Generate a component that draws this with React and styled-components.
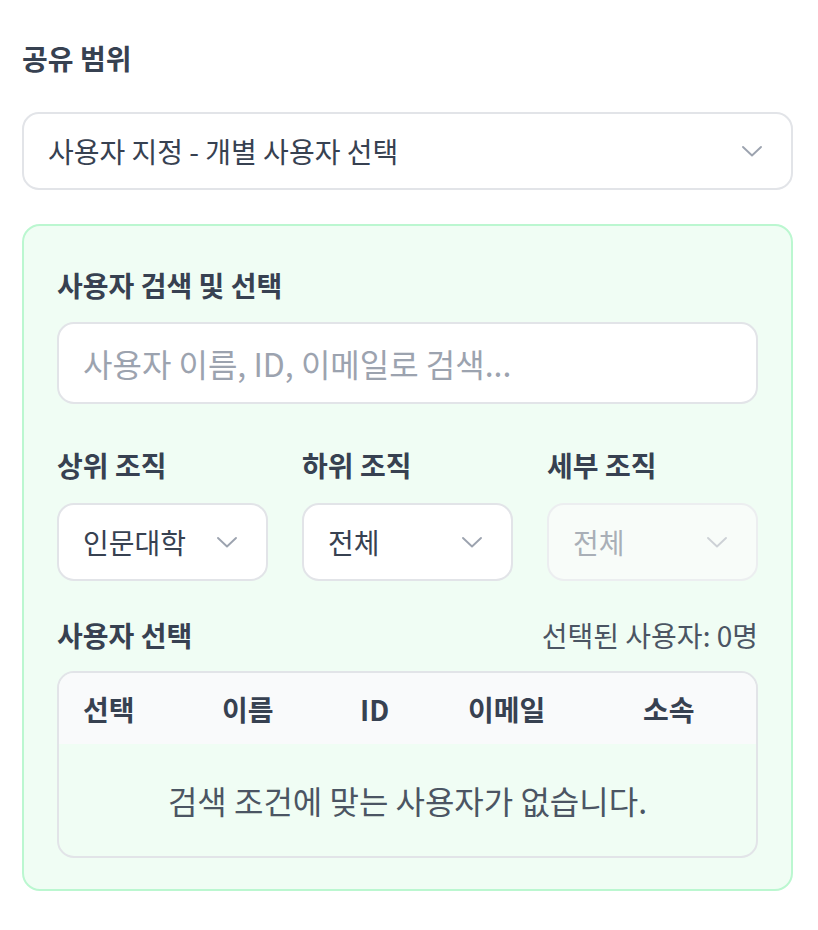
import React from "react";
import styled, { createGlobalStyle } from "styled-components";

const Global = createGlobalStyle`
  html, body { margin: 0; padding: 0; background: #ffffff; }
  body { font-family: "Noto Sans CJK KR", "Noto Sans", sans-serif; color: #374151; }
  * { box-sizing: border-box; }
`;

const Page = styled.div`
  padding: 37px 25px 40px 22px;
  display: flex;
  flex-direction: column;
`;

const Label = styled.div`
  font-size: 28px;
  font-weight: 700;
  color: #374151;
  line-height: 42px;
  white-space: nowrap;
`;

const Chevron = () => (
  <svg width="24" height="24" viewBox="0 0 24 24" fill="none" stroke="currentColor" strokeWidth="1.9" strokeLinecap="round" strokeLinejoin="round">
    <path d="M3 8l9 8.5 9-8.5" />
  </svg>
);

const ChevronWrap = styled.span`
  display: flex;
  color: ${(p) => (p.$disabled ? "#cdd1d6" : "#9ca3af")};
`;

const SelectBox = styled.div`
  display: flex;
  align-items: center;
  justify-content: space-between;
  height: 78px;
  margin-top: ${(p) => p.$mt || 0}px;
  padding: 0 27px 0 24px;
  border: 2px solid ${(p) => (p.$disabled ? "#eceef0" : "#e2e4e8")};
  border-radius: 17px;
  background: ${(p) => (p.$disabled ? "#f8fcf9" : "#ffffff")};
  font-size: 28px;
  color: ${(p) => (p.$disabled ? "#a9afb7" : "#374151")};
  white-space: nowrap;
`;

const Panel = styled.div`
  margin-top: 34px;
  background: #f0fdf4;
  border: 2px solid #bbf7d0;
  border-radius: 18px;
  padding: 38px 33px 31px 33px;
  display: flex;
  flex-direction: column;
`;

const SearchInput = styled.div`
  margin-top: 16px;
  height: 82px;
  border: 2px solid #e2e4e8;
  border-radius: 17px;
  background: #fff;
  display: flex;
  align-items: center;
  padding: 0 24px;
  font-size: 32px;
  color: #9ca3af;
  white-space: nowrap;
`;

const OrgGrid = styled.div`
  margin-top: 40px;
  display: grid;
  grid-template-columns: repeat(3, 1fr);
  gap: 34px;
`;

const OrgCol = styled.div`
  display: flex;
  flex-direction: column;
  gap: 17px;
`;

const SelectRow = styled.div`
  margin-top: 33px;
  display: flex;
  justify-content: space-between;
  align-items: center;
`;

const Count = styled.div`
  font-size: 28px;
  color: #4b5563;
  white-space: nowrap;
`;

const Table = styled.div`
  margin-top: 15px;
  border: 2px solid #e2e4e8;
  border-radius: 17px;
  overflow: hidden;
`;

const HeadRow = styled.div`
  display: grid;
  grid-template-columns: 139px 138px 108px 175px 1fr;
  background: #f9fafb;
  height: 71px;
  align-items: center;
`;

const HeadCell = styled.div`
  padding-left: 24px;
  font-size: 28px;
  font-weight: 700;
  color: #374151;
  white-space: nowrap;
`;

const Empty = styled.div`
  height: 112px;
  display: flex;
  align-items: center;
  justify-content: center;
  font-size: 32px;
  color: #4b5563;
  white-space: nowrap;
`;

const Select = ({ value, disabled, mt }) => (
  <SelectBox $disabled={disabled} $mt={mt}>
    <span>{value}</span>
    <ChevronWrap $disabled={disabled}>
      <Chevron />
    </ChevronWrap>
  </SelectBox>
);

const orgs = [
  { label: "상위 조직", value: "인문대학" },
  { label: "하위 조직", value: "전체" },
  { label: "세부 조직", value: "전체", disabled: true },
];

const headers = ["선택", "이름", "ID", "이메일", "소속"];

export default function App() {
  return (
    <>
      <Global />
      <Page>
        <Label>공유 범위</Label>
        <Select value="사용자 지정 - 개별 사용자 선택" mt={33} />
        <Panel>
          <Label>사용자 검색 및 선택</Label>
          <SearchInput>사용자 이름, ID, 이메일로 검색...</SearchInput>
          <OrgGrid>
            {orgs.map((o) => (
              <OrgCol key={o.label}>
                <Label>{o.label}</Label>
                <Select value={o.value} disabled={o.disabled} />
              </OrgCol>
            ))}
          </OrgGrid>
          <SelectRow>
            <Label>사용자 선택</Label>
            <Count>선택된 사용자: 0명</Count>
          </SelectRow>
          <Table>
            <HeadRow>
              {headers.map((h) => (
                <HeadCell key={h}>{h}</HeadCell>
              ))}
            </HeadRow>
            <Empty>검색 조건에 맞는 사용자가 없습니다.</Empty>
          </Table>
        </Panel>
      </Page>
    </>
  );
}
